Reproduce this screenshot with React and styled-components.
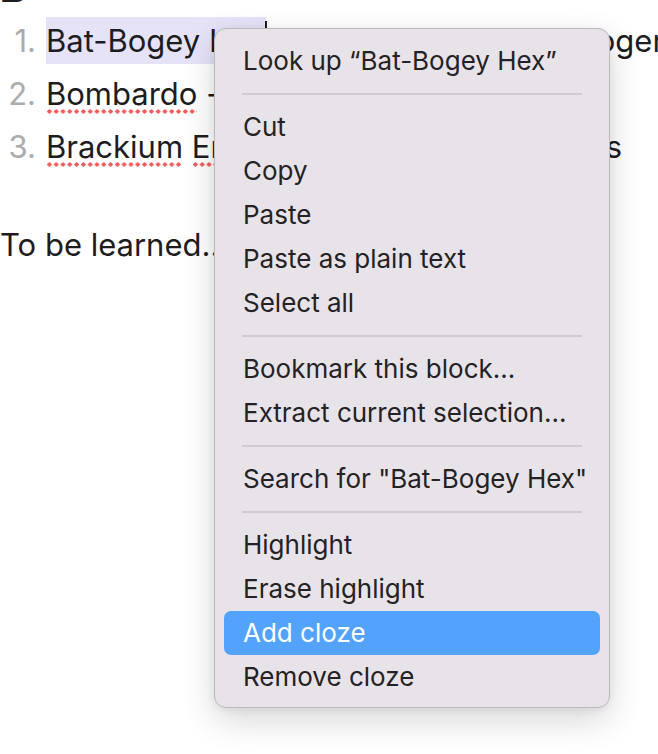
import React from "react";
import styled, { createGlobalStyle } from "styled-components";

const Global = createGlobalStyle`
  *, *::before, *::after { box-sizing: border-box; }
  html, body { margin: 0; padding: 0; background: #ffffff; }
  body {
    font-family: Inter, "Noto Sans", "DejaVu Sans", sans-serif;
    color: #1d1d1f;
    overflow: hidden;
  }
`;

const Page = styled.div`
  position: relative;
  width: 658px;
  height: 754px;
  overflow: hidden;
`;

const Heading = styled.h2`
  margin: -36px 0 2px 0;
  font-size: 40px;
  line-height: 48px;
  font-weight: 800;
  color: #1d1d1f;
`;

const List = styled.ol`
  list-style: none;
  margin: 0;
  padding: 0;
`;

const Row = styled.li`
  display: flex;
  gap: 10px;
  font-size: 31px;
  line-height: 53px;
  white-space: nowrap;
`;

const Num = styled.span`
  width: 36px;
  flex: none;
  text-align: right;
  color: #acacac;
`;

const Text = styled.span`
  color: #1d1d1f;
`;

const Selected = styled.span`
  position: relative;
  display: inline-block;
  line-height: 47px;
  background: #e6e2f8;
  &::after {
    content: "";
    position: absolute;
    right: -1px;
    top: 4px;
    bottom: 6px;
    width: 2px;
    background: #1d1d1f;
  }
`;

const Misspelled = styled.span`
  padding-bottom: 2px;
  background-image: radial-gradient(circle, #f25c5c 1.9px, transparent 2.3px);
  background-repeat: repeat-x;
  background-size: 6.8px 5px;
  background-position: 0 100%;
`;

const Paragraph = styled.p`
  margin: 45px 0 0 0;
  font-size: 31px;
  line-height: 53px;
`;

const Menu = styled.div`
  position: absolute;
  left: 214px;
  top: 28px;
  width: 396px;
  padding: 10px 9px 8px;
  background: #e8e3e9;
  border: 1px solid #bcb8bc;
  border-radius: 12px;
  box-shadow: 0 12px 34px rgba(0, 0, 0, 0.16), 0 2px 8px rgba(0, 0, 0, 0.06);
  display: flex;
  flex-direction: column;
`;

const Item = styled.div`
  height: 44px;
  line-height: 44px;
  padding-left: 19px;
  border-radius: 7px;
  font-size: 26px;
  white-space: nowrap;
  color: ${(p) => (p.$active ? "#ffffff" : "#242224")};
  background: ${(p) => (p.$active ? "#53a3fc" : "transparent")};
`;

const Separator = styled.div`
  height: 22px;
  display: flex;
  align-items: center;
  padding: 0 18px;
  &::before {
    content: "";
    flex: 1;
    height: 2px;
    background: #d0cbd0;
  }
`;

const menu = [
  ["Look up \u201CBat-Bogey Hex\u201D"],
  null,
  ["Cut"],
  ["Copy"],
  ["Paste"],
  ["Paste as plain text"],
  ["Select all"],
  null,
  ["Bookmark this block..."],
  ["Extract current selection..."],
  null,
  ['Search for "Bat-Bogey Hex"'],
  null,
  ["Highlight"],
  ["Erase highlight"],
  ["Add cloze", true],
  ["Remove cloze"],
];

export default function App() {
  return (
    <>
      <Global />
      <Page>
        <Heading>B</Heading>
        <List>
          <Row>
            <Num>1.</Num>
            <Text>
              <Selected>Bat-Bogey Hex</Selected> - turns the victim's boogers
            </Text>
          </Row>
          <Row>
            <Num>2.</Num>
            <Text>
              <Misspelled>Bombardo</Misspelled> - a blasting charm
            </Text>
          </Row>
          <Row>
            <Num>3.</Num>
            <Text>
              <Misspelled>Brackium</Misspelled> <Misspelled>Emendo</Misspelled> - fixes broken bones
            </Text>
          </Row>
        </List>
        <Paragraph>To be learned..</Paragraph>
        <Menu>
          {menu.map((m, i) =>
            m ? (
              <Item key={i} $active={m[1]}>
                {m[0]}
              </Item>
            ) : (
              <Separator key={i} />
            )
          )}
        </Menu>
      </Page>
    </>
  );
}
